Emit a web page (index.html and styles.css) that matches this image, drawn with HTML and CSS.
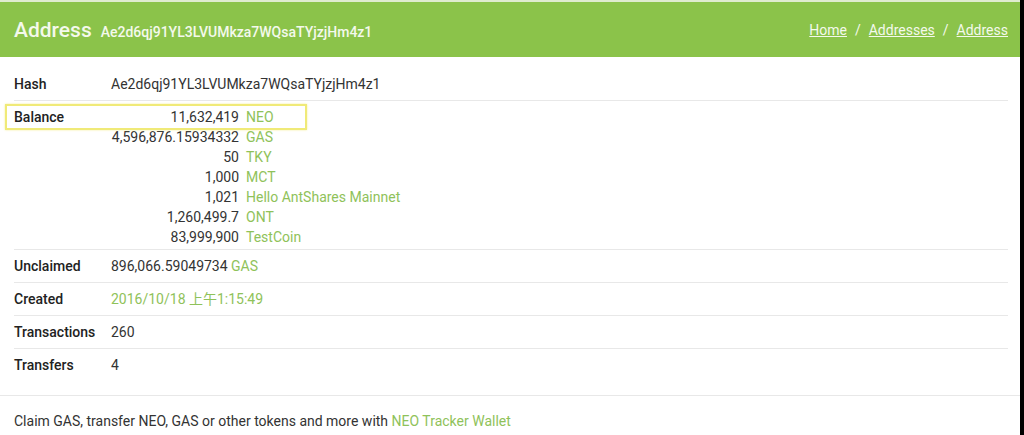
FILE: index.html
```html
<!DOCTYPE html>
<html lang="en">
<head>
    <meta charset="UTF-8">
    <meta name="viewport" content="width=device-width, initial-scale=1.0">
    <title>Address</title>
    <link rel="stylesheet" href="styles.css">
</head>
<body>

    <div class="page">
        <div class="header">
            <div class="title">
                <h1>Address</h1>
                <span class="hash">Ae2d6qj91YL3LVUMkza7WQsaTYjzjHm4z1</span>
            </div>
            <div class="crumbs">
                <a href="#">Home</a>
                <span class="sep">/</span>
                <a href="#">Addresses</a>
                <span class="sep">/</span>
                <a href="#">Address</a>
            </div>
        </div>

        <div class="details">
            <div class="row">
                <div class="label">Hash</div>
                <div class="value">Ae2d6qj91YL3LVUMkza7WQsaTYjzjHm4z1</div>
            </div>
            <div class="row balance-row">
                <div class="highlight"></div>
                <div class="label">Balance</div>
                <div class="balances">
                    <div class="coin"><span class="amount">11,632,419</span><a href="#">NEO</a></div>
                    <div class="coin"><span class="amount">4,596,876.15934332</span><a href="#">GAS</a></div>
                    <div class="coin"><span class="amount">50</span><a href="#">TKY</a></div>
                    <div class="coin"><span class="amount">1,000</span><a href="#">MCT</a></div>
                    <div class="coin"><span class="amount">1,021</span><a href="#">Hello AntShares Mainnet</a></div>
                    <div class="coin"><span class="amount">1,260,499.7</span><a href="#">ONT</a></div>
                    <div class="coin"><span class="amount">83,999,900</span><a href="#">TestCoin</a></div>
                </div>
            </div>
            <div class="row">
                <div class="label">Unclaimed</div>
                <div class="value">896,066.59049734 <a href="#">GAS</a></div>
            </div>
            <div class="row">
                <div class="label">Created</div>
                <div class="value"><a href="#">2016/10/18 上午1:15:49</a></div>
            </div>
            <div class="row">
                <div class="label">Transactions</div>
                <div class="value">260</div>
            </div>
            <div class="row">
                <div class="label">Transfers</div>
                <div class="value">4</div>
            </div>
        </div>

        <div class="footer">
            Claim GAS, transfer NEO, GAS or other tokens and more with <a href="#">NEO Tracker Wallet</a>
        </div>
    </div>

</body>
</html>
```

FILE: styles.css
```css
html {
    background-color: #000;
}

body {
    margin: 0;
    font-family: Roboto, "Liberation Sans", "Noto Sans CJK SC", sans-serif;
    font-size: 14px;
    color: #333;
}

.page {
    width: 1020px;
    height: 435px;
    background-color: #fff;
    border-top: 2px solid #dfeccf;
    box-sizing: border-box;
    overflow: hidden;
}

a {
    color: #8fc25a;
    text-decoration: none;
}

.header {
    height: 55px;
    padding: 0 12px 0 14px;
    background-color: #8bc34a;
    display: flex;
    align-items: center;
    justify-content: space-between;
    color: #f4f9ec;
}

.title {
    display: flex;
    align-items: baseline;
    gap: 9px;
}

.title h1 {
    margin: 0;
    font-size: 21px;
    font-weight: 500;
}

.hash {
    font-size: 14px;
    font-weight: 500;
}

.crumbs {
    font-size: 14px;
    display: flex;
    gap: 8px;
}

.crumbs a {
    color: #f4f9ec;
    text-decoration: underline;
}

.details {
    padding: 11px 12px 14px 14px;
}

.row {
    display: flex;
    line-height: 20px;
    padding: 6px 0;
    border-bottom: 1px solid #e8e8e8;
}

.row:last-child {
    border-bottom: none;
}

.label {
    width: 97px;
    font-weight: 500;
    color: #222;
}

.balance-row {
    position: relative;
    padding: 6px 0 2px;
}

.highlight {
    position: absolute;
    left: -9px;
    top: 3px;
    width: 298px;
    height: 22px;
    border: 2px solid #f0ea78;
    box-shadow: 0 0 2px #f4ef9a;
}

.coin {
    display: flex;
    gap: 7px;
}

.amount {
    width: 128px;
    text-align: right;
}

.footer {
    border-top: 1px solid #e8e8e8;
    padding: 15px 14px;
    line-height: 20px;
}
```
